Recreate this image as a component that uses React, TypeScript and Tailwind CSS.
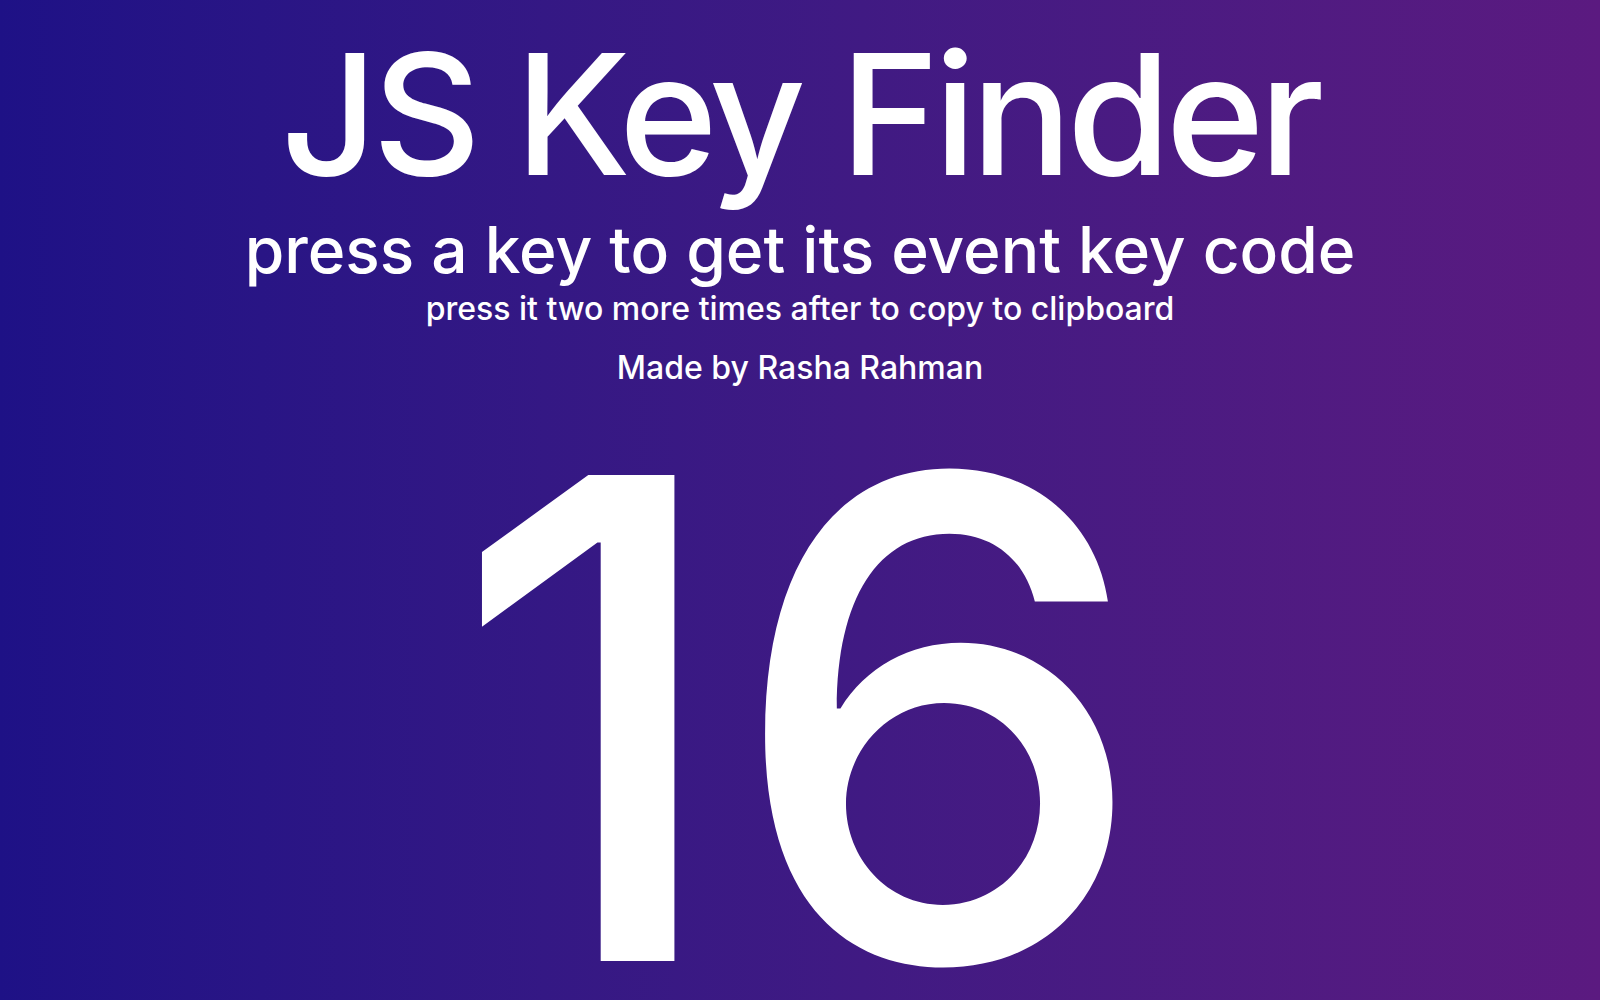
import React from "react";

export default function App() {
  return (
    <div
      className="w-full h-[1000px] overflow-hidden bg-gradient-to-r from-[#1e1186] to-[#5b1a80] text-white flex flex-col items-center font-medium"
      style={{ fontFamily: "Inter, 'Noto Sans', sans-serif" }}
    >
      <h1 className="mt-[30px] text-[168px] leading-none font-medium tracking-[-0.031em]">JS Key Finder</h1>
      <h2 className="mt-[20px] text-[64px] leading-none font-medium">press a key to get its event key code</h2>
      <p className="mt-[11px] text-[32px] leading-none">press it two more times after to copy to clipboard</p>
      <p className="mt-[27px] text-[32px] leading-none">Made by Rasha Rahman</p>
      <div className="mt-0 text-[668px] leading-none">16</div>
    </div>
  );
}
